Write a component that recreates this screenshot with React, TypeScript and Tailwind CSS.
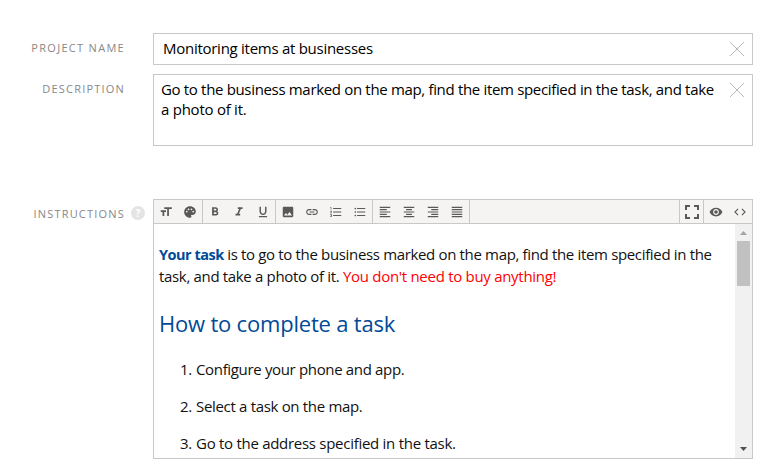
import type { ReactNode } from "react";
import {
  MdFormatSize, MdPalette, MdFormatBold, MdFormatItalic, MdFormatUnderlined, MdImage, MdLink,
  MdFormatListNumbered, MdFormatListBulleted, MdFormatAlignLeft, MdFormatAlignCenter,
  MdFormatAlignRight, MdFormatAlignJustify, MdRemoveRedEye, MdCode,
} from "react-icons/md";

function Clear() {
  return (
    <svg className="mt-2 h-[14px] w-[14px] shrink-0" viewBox="0 0 14 14" fill="none" stroke="#b8b8b8">
      <path d="M0 0l14 14M14 0l-14 14" />
    </svg>
  );
}

function Expand() {
  return (
    <svg className="h-[14px] w-[14px]" viewBox="0 0 14 14" fill="none" stroke="#595959" strokeWidth="2">
      <path d="M5 1H1v4M9 1h4v4M5 13H1V9M9 13h4V9" />
    </svg>
  );
}

function Group({ children, side = "border-r" }: { children: ReactNode; side?: string }) {
  return <div className={`flex border-[#c8c8c8] ${side}`}>{children}</div>;
}

function Tool({ children, width = "w-6" }: { children: ReactNode; width?: string }) {
  return (
    <button className={`flex h-[23px] items-center justify-center text-[14px] text-[#595959] ${width}`}>{children}</button>
  );
}

function Label({ children, className }: { children: ReactNode; className: string }) {
  return (
    <div className={`w-[126px] shrink-0 text-right text-[11px] leading-[14px] text-[#888] ${className}`}>{children}</div>
  );
}

const steps = [
  { text: "Configure your phone and app.", spacing: "tracking-[-0.34px]" },
  { text: "Select a task on the map.", spacing: "tracking-[-0.32px]" },
  { text: "Go to the address specified in the task.", spacing: "tracking-[-0.28px]" },
];

export default function App() {
  return (
    <main className="h-[461px] w-[772px] overflow-hidden bg-white pt-[33px] font-['Open_Sans','Noto_Sans',sans-serif] text-[15px] text-black">
      <div className="flex">
        <Label className="mr-[27px] pt-2 pr-px tracking-[1.3px]">PROJECT NAME</Label>
        <div className="flex h-8 w-[600px] justify-between border border-[#c8c8c8] pr-2 pl-[9px]">
          <span className="leading-[28px] tracking-[-0.27px]">Monitoring items at businesses</span>
          <Clear />
        </div>
      </div>
      <div className="mt-[9px] flex">
        <Label className="mr-[27px] pt-2 pr-px tracking-[1.2px]">DESCRIPTION</Label>
        <div className="flex h-[72px] w-[600px] justify-between border border-[#c8c8c8] pr-2 pl-[7px]">
          <div className="pt-1 leading-5 whitespace-nowrap">
            <div className="tracking-[-0.33px]">Go to the business marked on the map, find the item specified in the task, and take</div>
            <div className="tracking-[-0.25px]">a photo of it.</div>
          </div>
          <Clear />
        </div>
      </div>
      <div className="mt-[53px] flex">
        <Label className="pt-2 pr-px tracking-[1.2px]">INSTRUCTIONS</Label>
        <div className="mt-[7px] mr-2 ml-[5px] flex h-[14px] w-[14px] items-center justify-center rounded-full bg-[#e4e4e4] text-[10px] font-bold text-white">?</div>
        <section className="h-[260px] w-[600px] border border-[#c8c8c8]">
          <div className="flex h-6 justify-between border-b border-[#c8c8c8] bg-[#f5f4f2]">
            <div className="flex">
              <Group><Tool><MdFormatSize /></Tool><Tool><MdPalette /></Tool></Group>
              <Group><Tool><MdFormatBold /></Tool><Tool><MdFormatItalic /></Tool><Tool><MdFormatUnderlined /></Tool></Group>
              <Group><Tool><MdImage /></Tool><Tool><MdLink /></Tool><Tool><MdFormatListNumbered /></Tool><Tool><MdFormatListBulleted /></Tool></Group>
              <Group><Tool><MdFormatAlignLeft /></Tool><Tool><MdFormatAlignCenter /></Tool><Tool><MdFormatAlignRight /></Tool><Tool><MdFormatAlignJustify /></Tool></Group>
            </div>
            <div className="flex">
              <Group side="border-l"><Tool width="w-[23px]"><Expand /></Tool></Group>
              <Group side="border-l"><Tool><MdRemoveRedEye /></Tool><Tool><MdCode /></Tool></Group>
            </div>
          </div>
          <div className="flex h-[234px]">
            <div className="flex-1 pt-[19px] pl-[5px] whitespace-nowrap text-[#111]">
              <div className="leading-[22px]">
                <div className="h-[22px]"><b className="text-[14.5px] tracking-[-0.5px] text-[#004a96]">Your task</b><span className="tracking-[-0.34px]"> is to go to the business marked on the map, find the item specified in the</span></div>
                <div className="h-[22px]"><span className="tracking-[-0.33px]">task, and take a photo of it. </span><span className="tracking-[-0.29px] text-[#ff0000]">You don't need to buy anything!</span></div>
              </div>
              <h2 className="mt-5 text-[22px] leading-8 tracking-[-0.2px] text-[#004a96]">How to complete a task</h2>
              <ol className="mt-[19px] pl-[21px]">
                {steps.map((s, i) => (
                  <li key={s.text} className="mb-[15px] flex leading-[22px]">
                    <span className="w-4 tracking-[-0.3px]">{i + 1}.</span>
                    <span className={s.spacing}>{s.text}</span>
                  </li>
                ))}
              </ol>
            </div>
            <div className="flex w-[17px] flex-col items-center bg-[#f1f1f1]">
              <svg className="h-[17px] w-[17px] shrink-0" viewBox="0 0 17 17" fill="#a3a3a3"><path d="M5 11l3.5-4 3.5 4z" /></svg>
              <div className="h-[45px] w-[13px] bg-[#c1c1c1]" />
              <svg className="mt-auto h-[17px] w-[17px] shrink-0" viewBox="0 0 17 17" fill="#505050"><path d="M5 6l3.5 4L12 6z" /></svg>
            </div>
          </div>
        </section>
      </div>
    </main>
  );
}
